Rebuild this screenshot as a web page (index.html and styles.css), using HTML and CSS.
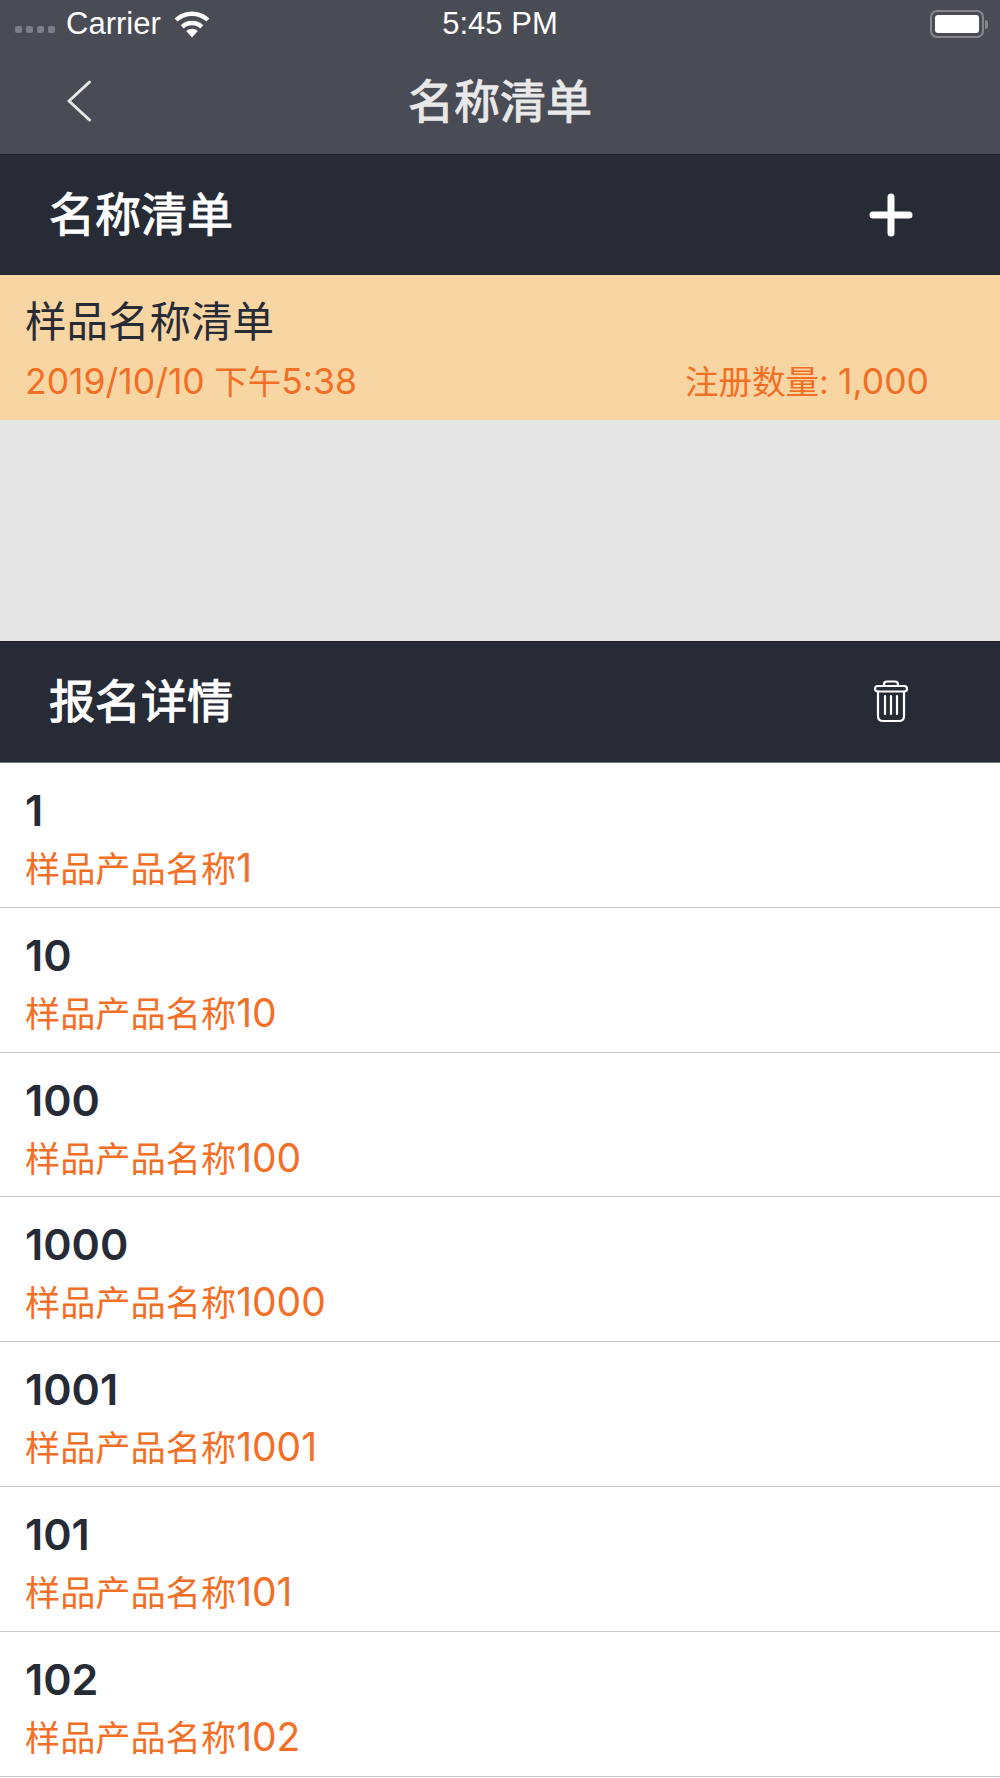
FILE: index.html
```html
<!DOCTYPE html>
<html lang="zh-CN">
<head>
  <meta charset="UTF-8" />
  <title>名称清单</title>
  <meta name="viewport" content="width=device-width, initial-scale=1.0" />
  <link rel="stylesheet" href="styles.css">
</head>
<body>
  <div class="top-bar">
    <div class="status-bar">
      <div class="status-left">
        <div class="signal"><i></i><i></i><i></i><i></i></div>
        <span class="carrier">Carrier</span>
        <svg class="wifi" width="38" height="28" viewBox="0 0 38 28">
          <path d="M19 27.5 L13.2 21 A8.6 8.6 0 0 1 24.8 21 Z" fill="#fff"/>
          <path d="M9.2 16.8 A14.5 14.5 0 0 1 28.8 16.8" fill="none" stroke="#fff" stroke-width="4.4"/>
          <path d="M3 10 A23.5 23.5 0 0 1 35 10" fill="none" stroke="#fff" stroke-width="4.4"/>
        </svg>
      </div>
      <span class="time">5:45 PM</span>
      <div class="status-right">
        <div class="battery"><div class="battery-fill"></div></div>
        <div class="battery-tip"></div>
      </div>
    </div>
    <div class="nav-bar">
      <svg class="back" width="26" height="42" viewBox="0 0 26 42">
        <path d="M23.5 2 L3 21 L23.5 40" fill="none" stroke="#e8e8e8" stroke-width="3" stroke-linecap="round" stroke-linejoin="round"/>
      </svg>
      <h1 class="nav-title">名称清单</h1>
    </div>
  </div>

  <div class="section-head">
    <h2>名称清单</h2>
    <svg class="head-icon" width="44" height="44" viewBox="0 0 44 44">
      <path d="M22 4 V40 M4 22 H40" stroke="#fff" stroke-width="7" stroke-linecap="round"/>
    </svg>
  </div>

  <div class="list-card">
    <div class="list-name">样品名称清单</div>
    <div class="list-meta">
      <span><span class="num">2019/10/10</span> 下午<span class="num">5:38</span></span>
      <span>注册数量: <span class="num">1,000</span></span>
    </div>
  </div>

  <div class="empty-area"></div>

  <div class="section-head">
    <h2>报名详情</h2>
    <svg class="head-icon" width="44" height="44" viewBox="0 0 44 44">
      <g fill="none" stroke="#fff" stroke-width="2.2" stroke-linecap="round" stroke-linejoin="round">
        <path d="M15 6 V4.5 Q15 1.5 18 1.5 H26 Q29 1.5 29 4.5 V6"/>
        <rect x="6" y="6" width="32" height="5.5" rx="2.7"/>
        <path d="M9 11.5 V36 Q9 41 14 41 H30 Q35 41 35 36 V11.5"/>
        <path d="M16 16 V34 M22 16 V34 M28 16 V34"/>
      </g>
    </svg>
  </div>

  <ul class="rows">
    <li class="row"><div class="row-id">1</div><div class="row-name">样品产品名称<span class="num">1</span></div></li>
    <li class="row"><div class="row-id">10</div><div class="row-name">样品产品名称<span class="num">10</span></div></li>
    <li class="row"><div class="row-id">100</div><div class="row-name">样品产品名称<span class="num">100</span></div></li>
    <li class="row"><div class="row-id">1000</div><div class="row-name">样品产品名称<span class="num">1000</span></div></li>
    <li class="row"><div class="row-id">1001</div><div class="row-name">样品产品名称<span class="num">1001</span></div></li>
    <li class="row"><div class="row-id">101</div><div class="row-name">样品产品名称<span class="num">101</span></div></li>
    <li class="row"><div class="row-id">102</div><div class="row-name">样品产品名称<span class="num">102</span></div></li>
  </ul>
</body>
</html>
```

FILE: styles.css
```css
html, body {
  margin: 0;
  padding: 0;
  height: 1778px;
  overflow: hidden;
  background: #fff;
  font-family: 'Inter', 'Noto Sans CJK SC', sans-serif;
}

.top-bar {
  height: 154px;
  background: #494c55;
}

.status-bar {
  height: 48px;
  padding: 0 15px;
  display: grid;
  grid-template-columns: 1fr auto 1fr;
  align-items: center;
  color: #fff;
  font-family: 'Liberation Sans', sans-serif;
}

.status-left {
  display: flex;
  align-items: center;
}

.signal {
  display: flex;
  gap: 4px;
  margin-top: 10px;
}

.signal i {
  width: 7px;
  height: 7px;
  border-radius: 2px;
  background: #7d7f86;
}

.carrier {
  font-size: 31px;
  margin-left: 11px;
}

.wifi {
  margin-left: 12px;
}

.time {
  font-size: 31px;
}

.status-right {
  display: flex;
  align-items: center;
  justify-content: flex-end;
  margin-right: -3px;
}

.battery {
  width: 54px;
  height: 28px;
  box-sizing: border-box;
  border: 2px solid #85878d;
  border-radius: 7px;
  padding: 3px;
}

.battery-fill {
  height: 100%;
  background: #fff;
  border-radius: 3px;
}

.battery-tip {
  width: 3px;
  height: 9px;
  margin-left: 1px;
  background: #85878d;
  border-radius: 0 3px 3px 0;
}

.nav-bar {
  position: relative;
  height: 106px;
  display: flex;
  align-items: center;
  justify-content: center;
}

.back {
  position: absolute;
  left: 66px;
  top: 32px;
}

.nav-title {
  margin: 0 0 6px;
  font-size: 46px;
  font-weight: 400;
  -webkit-text-stroke: 1.1px #e8e8e8;
  color: #e8e8e8;
}

.section-head {
  height: 120px;
  padding: 0 87px 0 49px;
  display: flex;
  align-items: center;
  justify-content: space-between;
  background: #272b36;
  border-top: 1px solid #20232c;
}

.section-head h2 {
  margin: 0 0 9px;
  font-size: 46px;
  font-weight: 400;
  -webkit-text-stroke: 1.1px #fff;
  color: #fff;
}

.list-card {
  height: 145px;
  padding: 21px 71px 0 25px;
  box-sizing: border-box;
  background: #f8d6a4;
}

.list-name {
  font-size: 41.5px;
  line-height: 52px;
  color: #272b36;
}

.list-meta {
  display: flex;
  justify-content: space-between;
  margin-top: 11px;
  font-size: 33.5px;
  line-height: 46px;
  color: #f26f25;
}

.list-meta .num {
  font-size: 35.5px;
}

.empty-area {
  height: 221px;
  background: #e6e6e6;
}

.rows {
  list-style: none;
  margin: 0;
  padding: 0;
  border-top: 1px solid #777;
}

.row {
  height: 144.83px;
  box-sizing: border-box;
  padding: 20px 25px 0;
  border-bottom: 1.5px solid #c8c8c8;
}

.row-id {
  font-size: 43px;
  font-weight: 600;
  line-height: 54px;
  color: #272b36;
}

.row-name {
  margin-top: 8px;
  font-size: 35.2px;
  line-height: 46px;
  color: #f26f25;
}

.row-name .num {
  font-size: 39px;
}
```
